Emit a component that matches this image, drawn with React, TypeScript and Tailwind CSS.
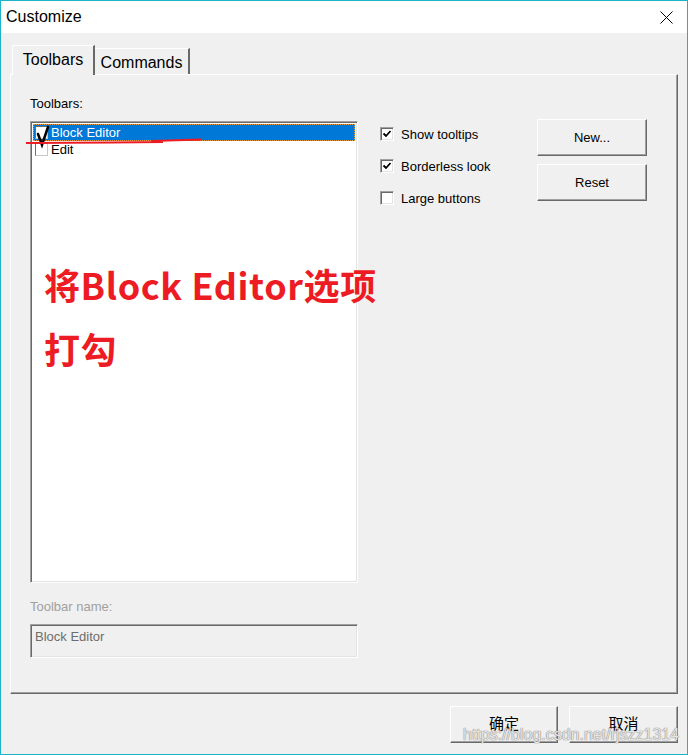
import React from "react";

const raised =
  "border border-t-white border-l-white border-r-[#696969] border-b-[#696969] shadow-[inset_-1px_-1px_#a0a0a0]";
const sunken =
  "border border-t-[#a0a0a0] border-l-[#a0a0a0] border-r-white border-b-white shadow-[inset_1px_1px_#696969,inset_-1px_-1px_#e3e3e3]";

function CheckGlyph() {
  return (
    <svg width="10" height="10" viewBox="0 0 10 10" className="block">
      <path d="M1.5 4.5 L4 7 L8.5 2" fill="none" stroke="#000" strokeWidth="1.8" />
    </svg>
  );
}

function CheckBox({ checked, label }: { checked: boolean; label: string }) {
  return (
    <div className="flex items-center h-[14px]">
      <div className={`w-[14px] h-[14px] bg-white flex items-center justify-center ${sunken}`}>
        {checked && <CheckGlyph />}
      </div>
      <span className="ml-[7px] text-[13px] leading-[15px] text-black">{label}</span>
    </div>
  );
}

function Button({ label, className = "" }: { label: string; className?: string }) {
  return (
    <div
      className={`bg-[#f0f0f0] flex items-center justify-center text-[13px] text-black ${raised} ${className}`}
    >
      {label}
    </div>
  );
}

// little checkbox used inside the list rows
function ListBox() {
  return (
    <div className="ml-[1px] w-[13px] h-[13px] bg-white border border-t-[#6d6d6d] border-l-[#6d6d6d] border-r-[#c8c8c8] border-b-[#c8c8c8]" />
  );
}

export default function App() {
  return (
    <div className="relative w-[688px] h-[755px] border border-[#1bb3c7] flex flex-col bg-[#f0f0f0] font-['Liberation_Sans','Noto_Sans_CJK_SC',sans-serif] overflow-hidden">
      {/* Title bar */}
      <div className="h-[32px] bg-white flex items-center justify-between pl-[5px] pr-[14px]">
        <span className="text-[16px] text-black">Customize</span>
        <svg width="13" height="13" viewBox="0 0 13 13">
          <path d="M0.5 0.5 L12.5 12.5 M12.5 0.5 L0.5 12.5" stroke="#000" strokeWidth="1" />
        </svg>
      </div>

      {/* Tabs */}
      <div className="mt-[12px] h-[29px] flex items-end pl-[11px]">
        <div className="relative z-10 -mb-px h-[30px] w-[83px] bg-[#f0f0f0] border-t border-l border-t-white border-l-white border-r-2 border-r-[#696969] flex items-center justify-center pb-[2px] text-[16px] text-black">
          Toolbars
        </div>
        <div className="h-[26px] w-[95px] border-t border-t-white border-r-2 border-r-[#696969] flex items-center justify-center pt-[2px] text-[16px] text-black">
          Commands
        </div>
      </div>

      {/* Tab panel */}
      <div className="ml-[9px] w-[668px] h-[620px] border border-t-white border-l-white border-r-[#696969] border-b-[#696969] shadow-[inset_-1px_-1px_#a0a0a0] pl-[19px] pt-[21px] flex">
        <div className="w-[328px] flex flex-col">
          <div className="text-[13px] leading-[15px] text-black">Toolbars:</div>
          <div className={`mt-[10px] h-[462px] bg-white ${sunken} p-[2px]`}>
            <div className="h-[17px] bg-[#0078d7] flex items-center border border-dotted border-[#e79a3c]">
              <ListBox />
              <span className="ml-[3px] text-[13px] leading-[15px] text-white">Block Editor</span>
            </div>
            <div className="h-[17px] flex items-center pl-px">
              <ListBox />
              <span className="ml-[3px] text-[13px] leading-[15px] text-black">Edit</span>
            </div>
          </div>
          <div className="mt-[16px] text-[13px] leading-[15px] text-[#a0a0a0]">Toolbar name:</div>
          <div className={`mt-[10px] h-[34px] bg-[#f0f0f0] ${sunken} pl-[4px] pt-[4px] text-[13px] leading-[15px] text-[#6d6d6d]`}>
            Block Editor
          </div>
        </div>

        <div className="ml-[22px] w-[157px] mt-[31px] flex flex-col gap-[18px]">
          <CheckBox checked label="Show tooltips" />
          <CheckBox checked label="Borderless look" />
          <CheckBox checked={false} label="Large buttons" />
        </div>

        <div className="mt-[23px] flex flex-col gap-[8px]">
          <Button label="New..." className="w-[110px] h-[37px]" />
          <Button label="Reset" className="w-[110px] h-[37px]" />
        </div>
      </div>

      {/* Dialog buttons */}
      <div className="mt-[12px] flex justify-end gap-[11px] pr-[9px]">
        <Button label="确定" className="w-[108px] h-[37px] text-[15px]" />
        <Button label="取消" className="w-[109px] h-[37px] text-[15px]" />
      </div>

      {/* Annotation overlays */}
      <svg className="absolute left-0 top-0 pointer-events-none" width="688" height="755">
        <path d="M37 133 L41 144 L47 126" fill="none" stroke="#000" strokeWidth="2.5" strokeLinecap="round" />
        <path d="M25 142 L110 141.5 L162 141 M150 140 L200 138.5" fill="none" stroke="#ec1c24" strokeWidth="2" />
      </svg>
      <div className="absolute left-[43px] top-[251px] text-[36px] leading-[64px] tracking-[0.6px] font-bold text-[#ed1c24] font-['Noto_Sans_CJK_SC',sans-serif]">
        <div>将Block Editor选项</div>
        <div>打勾</div>
      </div>
      <div className="absolute left-[462px] top-[724px] text-[16px] leading-[20px] text-white/80 [text-shadow:0_0_1px_#777,0_0_1px_#777] pointer-events-none">
        https://blog.csdn.net/rjszz1314
      </div>
    </div>
  );
}
